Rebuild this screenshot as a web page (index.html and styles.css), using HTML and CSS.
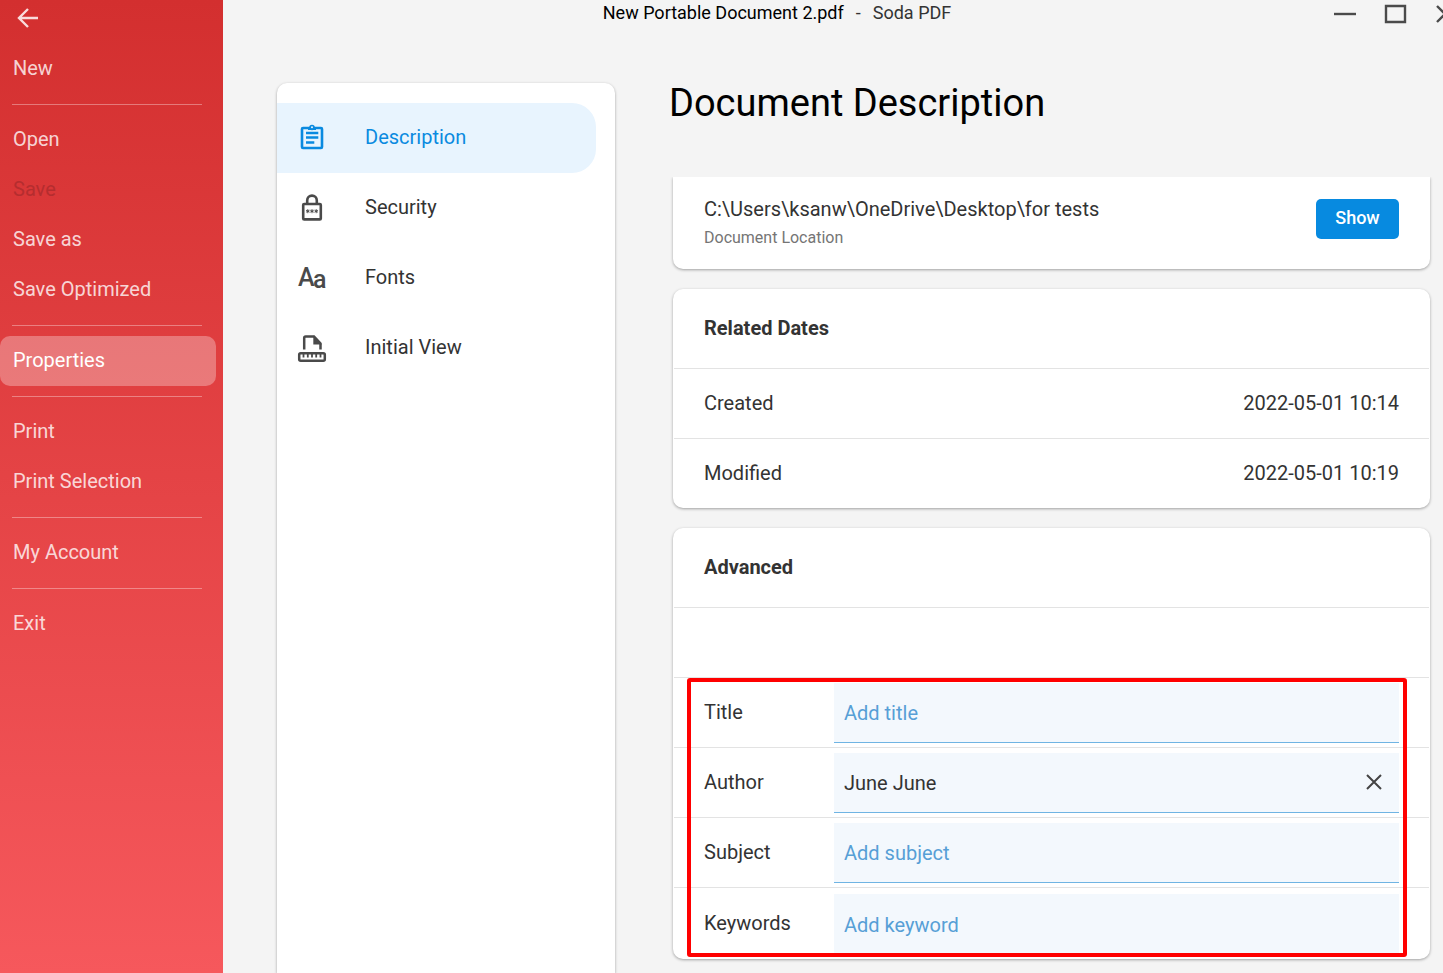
FILE: index.html
```html
<!DOCTYPE html>
<html lang="en">
<head>
    <meta charset="UTF-8">
    <meta name="viewport" content="width=device-width, initial-scale=1.0">
    <title>New Portable Document 2.pdf - Soda PDF</title>
    <link rel="stylesheet" href="styles.css">
</head>
<body>
    <div class="app">
        <nav class="sidebar">
            <button class="back-btn" aria-label="Back">
                <svg width="22" height="20" viewBox="0 0 22 20"><path d="M11 1L2 10l9 9M2.5 10H21" fill="none" stroke="currentColor" stroke-width="2.4"/></svg>
            </button>
            <button class="menu-item">New</button>
            <hr>
            <button class="menu-item">Open</button>
            <button class="menu-item" disabled>Save</button>
            <button class="menu-item">Save as</button>
            <button class="menu-item">Save Optimized</button>
            <hr>
            <button class="menu-item active">Properties</button>
            <hr>
            <button class="menu-item">Print</button>
            <button class="menu-item">Print Selection</button>
            <hr>
            <button class="menu-item">My Account</button>
            <hr>
            <button class="menu-item">Exit</button>
        </nav>

        <div class="main">
            <header class="titlebar">
                <div class="window-title"><span class="file-name">New Portable Document 2.pdf</span><span>-</span><span class="app-name">Soda PDF</span></div>
                <div class="window-controls">
                    <button aria-label="Minimize"><svg width="28" height="28" viewBox="0 0 28 28"><path d="M3 14h22" stroke-width="2.4"/></svg></button>
                    <button aria-label="Maximize"><svg width="28" height="28" viewBox="0 0 28 28"><path d="M4 6h19v16H4z" stroke-width="2.4"/></svg></button>
                    <button aria-label="Close"><svg width="28" height="28" viewBox="0 0 28 28"><path d="M4 6l16 16M20 6L4 22" stroke-width="2.4"/></svg></button>
                </div>
            </header>

            <div class="columns">
                <aside class="tabs">
                    <a href="#description" class="tab active">
                        <svg width="32" height="32" viewBox="0 0 32 32" fill="none" stroke="currentColor" stroke-width="2.6">
                            <rect x="6" y="6" width="20" height="20" rx="1"/>
                            <path d="M12 6h1.2a3 3 0 0 1 5.6 0H20v2h-8z" fill="currentColor" stroke="none"/>
                            <circle cx="16" cy="5.5" r="2.8" fill="currentColor" stroke="none"/>
                            <circle cx="16" cy="5.2" r="1" fill="#e8f4fe" stroke="none"/>
                            <path d="M10 11h12.300M10 15.500h12.300M10 20.500h8.300" stroke-width="2.300"/>
                        </svg>
                        Description
                    </a>
                    <a href="#security" class="tab">
                        <svg width="32" height="32" viewBox="0 0 32 32" fill="none" stroke="currentColor" stroke-width="2.6">
                            <rect x="7.200" y="12" width="17.600" height="15.400" rx="1"/>
                            <path d="M11.200 12V8.400a4.800 4.800 0 0 1 9.600 0V12"/>
                            <path d="M11.800 17.200v4M10.100 18.200l3.400 2M13.500 18.200l-3.400 2M16 17.200v4M14.300 18.200l3.400 2M17.700 18.200l-3.400 2M20.200 17.200v4M18.500 18.200l3.400 2M21.900 18.200l-3.400 2" stroke-width="1"/>
                        </svg>
                        Security
                    </a>
                    <a href="#fonts" class="tab">
                        <svg class="fonts-icon" width="32" height="32" viewBox="0 0 32 32" fill="currentColor" aria-hidden="true">
                            <text x="2" y="24" font-size="25">A</text>
                            <text x="17" y="26" font-size="25">a</text>
                        </svg>
                        Fonts
                    </a>
                    <a href="#initial-view" class="tab">
                        <svg width="32" height="32" viewBox="0 0 32 32" fill="none" stroke="currentColor" stroke-width="2.5">
                            <path d="M8.200 17.500V6q0-1.500 1.500-1.500H18l6.500 7v6"/>
                            <path d="M17.300 3.500l8.500 9h-8.500z" fill="currentColor" stroke="none"/>
                            <rect x="3.200" y="21.300" width="25.600" height="7.500" rx="1.500"/>
                            <path d="M7.500 22v3.500M11.800 22v3.500M16 22v3.500M20.200 22v3.500M24.500 22v3.500" stroke-width="1.800"/>
                        </svg>
                        Initial View
                    </a>
                </aside>

                <main class="content">
                    <h1>Document Description</h1>
                    <div class="cards">
                        <section class="card location">
                            <div>
                                <p class="path">C:\Users\ksanw\OneDrive\Desktop\for tests</p>
                                <p class="caption">Document Location</p>
                            </div>
                            <button class="show-btn">Show</button>
                        </section>

                        <section class="card">
                            <h2>Related Dates</h2>
                            <dl>
                                <div class="row"><dt>Created</dt><dd>2022-05-01 10:14</dd></div>
                                <div class="row"><dt>Modified</dt><dd>2022-05-01 10:19</dd></div>
                            </dl>
                        </section>

                        <section class="card advanced">
                            <h2>Advanced</h2>
                            <div class="row"></div>
                            <form class="fields">
                                <div class="row">
                                    <label for="title">Title</label>
                                    <div class="field"><input type="text" id="title" placeholder="Add title"></div>
                                </div>
                                <div class="row">
                                    <label for="author">Author</label>
                                    <div class="field">
                                        <input type="text" id="author" value="June June">
                                        <button type="button" class="clear-btn" aria-label="Clear author"><svg width="16" height="16" viewBox="0 0 16 16"><path d="M1 1l14 14M15 1L1 15" stroke="currentColor" stroke-width="2"/></svg></button>
                                    </div>
                                </div>
                                <div class="row">
                                    <label for="subject">Subject</label>
                                    <div class="field"><input type="text" id="subject" placeholder="Add subject"></div>
                                </div>
                                <div class="row keywords">
                                    <label for="keywords">Keywords</label>
                                    <div class="field"><input type="text" id="keywords" placeholder="Add keyword"></div>
                                </div>
                                <div class="highlight"></div>
                            </form>
                        </section>
                    </div>
                </main>
            </div>
        </div>
    </div>
</body>
</html>
```
FILE: styles.css
```css
* {
    box-sizing: border-box;
}
body {
    margin: 0;
    font-family: Roboto, sans-serif;
    font-size: 20px;
    color: #333;
    background: #f4f4f4;
}
button, input {
    font: inherit;
    border: none;
    background: none;
    padding: 0;
}
button {
    cursor: pointer;
}
h1, h2, p, dl, dd {
    margin: 0;
}
.app {
    display: flex;
    height: 100vh;
    overflow: hidden;
}

/* Left menu */
.sidebar {
    flex: 0 0 223px;
    display: flex;
    flex-direction: column;
    background: linear-gradient(#d32f2f, #f6585c);
}
.back-btn {
    height: 44px;
    padding: 8px 17px 16px;
    text-align: left;
    color: #f9dcdc;
}
.back-btn svg {
    display: block;
}
.menu-item {
    height: 50px;
    margin-right: 7px;
    padding: 0 13px 2px;
    text-align: left;
    color: rgba(255, 255, 255, 0.8);
    border-radius: 10px;
}
.menu-item:disabled {
    color: #b52d2f;
}
.menu-item.active {
    color: white;
    background: rgba(255, 255, 255, 0.3);
}
.sidebar hr {
    width: 190px;
    height: 1px;
    margin: 10px 12px;
    border: none;
    background: rgba(255, 255, 255, 0.35);
}

/* Window bar */
.main {
    flex: 1;
    min-width: 0;
    display: flex;
    flex-direction: column;
}
.titlebar {
    display: flex;
    height: 28px;
}
.window-title {
    flex: 1;
    display: flex;
    justify-content: center;
    gap: 12px;
    font-size: 18px;
    line-height: 26px;
}
.file-name {
    color: black;
}
.window-controls {
    flex: 0 0 112px;
    display: flex;
    gap: 23px;
    overflow: hidden;
}
.window-controls button {
    flex: 0 0 28px;
}
.window-controls svg {
    display: block;
    fill: none;
    stroke: #4a4a4a;
}
.columns {
    flex: 1;
    min-height: 0;
    display: flex;
}

/* Properties tabs */
.tabs {
    flex: 0 0 338px;
    margin: 55px 54px 0;
    padding-top: 20px;
    background: white;
    border-radius: 10px 10px 0 0;
    box-shadow: 0 1px 3px rgba(0, 0, 0, 0.35);
}
.tab {
    display: flex;
    align-items: center;
    gap: 37px;
    height: 70px;
    margin-right: 19px;
    padding-left: 19px;
    color: #333;
    text-decoration: none;
    line-height: 24px;
    padding-bottom: 2px;
}
.tab svg {
    color: #4a4a4a;
    margin-top: 2px;
}
.tab.active {
    color: #0a8ae0;
    background: #e8f4fe;
    border-radius: 0 24px 24px 0;
}
.tab.active svg {
    color: #0a8ae0;
}
.fonts-icon {
    font-weight: 500;
}

/* Document details */
.content {
    flex: 1;
    min-width: 0;
    display: flex;
    flex-direction: column;
}
h1 {
    padding: 51px 0 50px;
    font-size: 38px;
    font-weight: 400;
    line-height: 48px;
    color: black;
}
.cards {
    flex: 1;
    min-height: 0;
    padding: 0 13px 13px 4px;
    overflow: hidden;
}
.card {
    margin-bottom: 20px;
    padding: 0 1px;
    background: white;
    border-radius: 10px;
    box-shadow: 0 1px 3px rgba(0, 0, 0, 0.35);
}
.location {
    display: flex;
    justify-content: space-between;
    align-items: flex-start;
    padding: 20px 31px 19px;
    border-radius: 0 0 10px 10px;
}
.path {
    line-height: 25px;
}
.caption {
    font-size: 16px;
    line-height: 32px;
    color: #757575;
}
.show-btn {
    width: 83px;
    height: 40px;
    margin: 2px 0 11px;
    padding-bottom: 4px;
    font-size: 18px;
    font-weight: 500;
    color: white;
    background: #078ae0;
    border-radius: 5px;
}
.location {
    height: 92px;
}
h2 {
    padding: 0 30px;
    font-size: 20px;
    font-weight: 700;
    line-height: 79px;
}
.row {
    display: flex;
    align-items: center;
    justify-content: space-between;
    height: 70px;
    padding: 0 30px;
    border-top: 1px solid #e3e3e3;
}
.row dt, .row dd, .row label {
    padding-bottom: 2px;
}
.fields {
    position: relative;
}
.fields label {
    flex: 0 0 130px;
}
.field {
    flex: 1;
    display: flex;
    align-items: center;
    height: 60px;
    background: #f3f8fd;
    border-bottom: 1px solid #6fb4e3;
}
.field input {
    flex: 1;
    min-width: 0;
    height: 58px;
    padding: 2px 10px 0;
    color: #333;
    outline: none;
}
.field input::placeholder {
    color: #579fd6;
    opacity: 1;
}
.clear-btn {
    padding: 0 17px;
    color: #444;
}
.clear-btn svg {
    display: block;
}
.keywords {
    height: 72px;
}
.keywords .field {
    border-bottom: none;
}
.highlight {
    position: absolute;
    inset: 1px 22px 2px 13px;
    border: 4px solid #f00;
    border-radius: 3px;
    pointer-events: none;
}
```
